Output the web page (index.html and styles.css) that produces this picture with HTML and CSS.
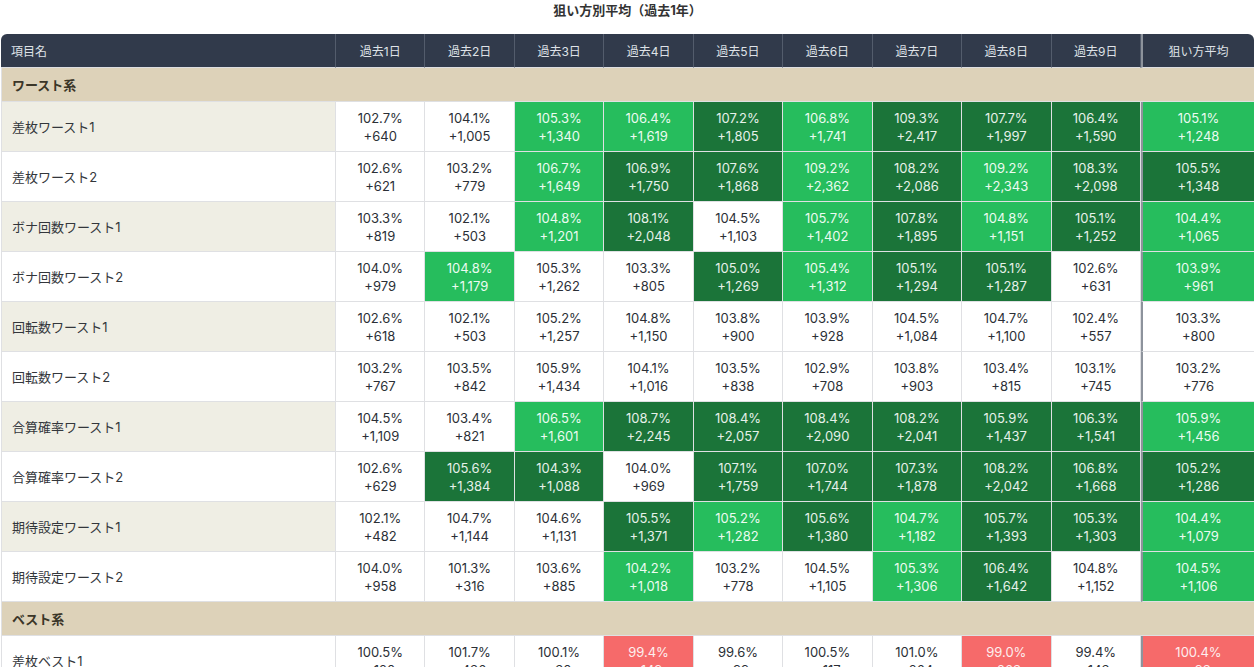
FILE: index.html
```html
<!DOCTYPE html>
<html lang="ja">
<head>
<meta charset="utf-8">
<title>狙い方別平均</title>
<link rel="stylesheet" href="styles.css">
</head>
<body>
<div class="page">
  <h1 class="title">狙い方別平均（過去1年）</h1>
  <table class="grid">
    <colgroup>
      <col class="c-label">
      <col class="c-day"><col class="c-day"><col class="c-day"><col class="c-day"><col class="c-day"><col class="c-day"><col class="c-day"><col class="c-day"><col class="c-day">
      <col class="c-avg">
    </colgroup>
    <thead>
      <tr>
        <th class="h-label">項目名</th>
        <th>過去1日</th><th>過去2日</th><th>過去3日</th><th>過去4日</th><th>過去5日</th><th>過去6日</th><th>過去7日</th><th>過去8日</th><th>過去9日</th>
        <th class="avg">狙い方平均</th>
      </tr>
    </thead>
    <tbody>
      <tr class="group"><td colspan="11">ワースト系</td></tr>
      <tr><td class="label">差枚ワースト1</td>
        <td>102.7%<br>+640</td><td>104.1%<br>+1,005</td><td class="lg">105.3%<br>+1,340</td><td class="lg">106.4%<br>+1,619</td><td class="dg">107.2%<br>+1,805</td><td class="lg">106.8%<br>+1,741</td><td class="dg">109.3%<br>+2,417</td><td class="dg">107.7%<br>+1,997</td><td class="dg">106.4%<br>+1,590</td><td class="avg lg">105.1%<br>+1,248</td></tr>
      <tr><td class="label">差枚ワースト2</td>
        <td>102.6%<br>+621</td><td>103.2%<br>+779</td><td class="lg">106.7%<br>+1,649</td><td class="dg">106.9%<br>+1,750</td><td class="dg">107.6%<br>+1,868</td><td class="lg">109.2%<br>+2,362</td><td class="dg">108.2%<br>+2,086</td><td class="lg">109.2%<br>+2,343</td><td class="dg">108.3%<br>+2,098</td><td class="avg dg">105.5%<br>+1,348</td></tr>
      <tr><td class="label">ボナ回数ワースト1</td>
        <td>103.3%<br>+819</td><td>102.1%<br>+503</td><td class="lg">104.8%<br>+1,201</td><td class="dg">108.1%<br>+2,048</td><td>104.5%<br>+1,103</td><td class="lg">105.7%<br>+1,402</td><td class="dg">107.8%<br>+1,895</td><td class="lg">104.8%<br>+1,151</td><td class="dg">105.1%<br>+1,252</td><td class="avg lg">104.4%<br>+1,065</td></tr>
      <tr><td class="label">ボナ回数ワースト2</td>
        <td>104.0%<br>+979</td><td class="lg">104.8%<br>+1,179</td><td>105.3%<br>+1,262</td><td>103.3%<br>+805</td><td class="dg">105.0%<br>+1,269</td><td class="lg">105.4%<br>+1,312</td><td class="dg">105.1%<br>+1,294</td><td class="dg">105.1%<br>+1,287</td><td>102.6%<br>+631</td><td class="avg lg">103.9%<br>+961</td></tr>
      <tr><td class="label">回転数ワースト1</td>
        <td>102.6%<br>+618</td><td>102.1%<br>+503</td><td>105.2%<br>+1,257</td><td>104.8%<br>+1,150</td><td>103.8%<br>+900</td><td>103.9%<br>+928</td><td>104.5%<br>+1,084</td><td>104.7%<br>+1,100</td><td>102.4%<br>+557</td><td class="avg">103.3%<br>+800</td></tr>
      <tr><td class="label">回転数ワースト2</td>
        <td>103.2%<br>+767</td><td>103.5%<br>+842</td><td>105.9%<br>+1,434</td><td>104.1%<br>+1,016</td><td>103.5%<br>+838</td><td>102.9%<br>+708</td><td>103.8%<br>+903</td><td>103.4%<br>+815</td><td>103.1%<br>+745</td><td class="avg">103.2%<br>+776</td></tr>
      <tr><td class="label">合算確率ワースト1</td>
        <td>104.5%<br>+1,109</td><td>103.4%<br>+821</td><td class="lg">106.5%<br>+1,601</td><td class="dg">108.7%<br>+2,245</td><td class="dg">108.4%<br>+2,057</td><td class="dg">108.4%<br>+2,090</td><td class="dg">108.2%<br>+2,041</td><td class="dg">105.9%<br>+1,437</td><td class="dg">106.3%<br>+1,541</td><td class="avg lg">105.9%<br>+1,456</td></tr>
      <tr><td class="label">合算確率ワースト2</td>
        <td>102.6%<br>+629</td><td class="dg">105.6%<br>+1,384</td><td class="dg">104.3%<br>+1,088</td><td>104.0%<br>+969</td><td class="dg">107.1%<br>+1,759</td><td class="dg">107.0%<br>+1,744</td><td class="dg">107.3%<br>+1,878</td><td class="dg">108.2%<br>+2,042</td><td class="dg">106.8%<br>+1,668</td><td class="avg dg">105.2%<br>+1,286</td></tr>
      <tr><td class="label">期待設定ワースト1</td>
        <td>102.1%<br>+482</td><td>104.7%<br>+1,144</td><td>104.6%<br>+1,131</td><td class="dg">105.5%<br>+1,371</td><td class="lg">105.2%<br>+1,282</td><td class="dg">105.6%<br>+1,380</td><td class="lg">104.7%<br>+1,182</td><td class="dg">105.7%<br>+1,393</td><td class="dg">105.3%<br>+1,303</td><td class="avg lg">104.4%<br>+1,079</td></tr>
      <tr><td class="label">期待設定ワースト2</td>
        <td>104.0%<br>+958</td><td>101.3%<br>+316</td><td>103.6%<br>+885</td><td class="lg">104.2%<br>+1,018</td><td>103.2%<br>+778</td><td>104.5%<br>+1,105</td><td class="lg">105.3%<br>+1,306</td><td class="dg">106.4%<br>+1,642</td><td>104.8%<br>+1,152</td><td class="avg lg">104.5%<br>+1,106</td></tr>
      <tr class="group"><td colspan="11">ベスト系</td></tr>
      <tr><td class="label">差枚ベスト1</td>
        <td>100.5%<br>+120</td><td>101.7%<br>+436</td><td>100.1%<br>+30</td><td class="rd">99.4%<br>-149</td><td>99.6%<br>-99</td><td>100.5%<br>+117</td><td>101.0%<br>+264</td><td class="rd">99.0%<br>-263</td><td>99.4%<br>-143</td><td class="avg rd">100.4%<br>+93</td></tr>
    </tbody>
  </table>
</div>
</body>
</html>
```
FILE: styles.css
```css
html, body {
  margin: 0;
  padding: 0;
  background: #ffffff;
}
body {
  font-family: "Inter", "Noto Sans CJK JP", "Noto Sans", sans-serif;
  color: #2b2f36;
}
.page {
  padding: 0 1px;
}
.title {
  margin: 0;
  height: 20px;
  line-height: 20px;
  font-size: 13px;
  font-weight: 700;
  text-align: center;
  color: #333333;
  margin-bottom: 14px;
}
.grid {
  width: 1253px;
  table-layout: fixed;
  border-collapse: separate;
  border-spacing: 0;
  font-size: 13px;
}
.c-label { width: 335px; }
.c-avg { width: 113px; }
.grid thead th {
  background: #313a4b;
  color: #dfe2e7;
  font-weight: 400;
  font-size: 12px;
  height: 33px;
  padding: 0;
  text-align: center;
  border-right: 1px solid #535c6c;
  border-bottom: 1px solid #dcdde0;
}
.grid thead th.h-label {
  text-align: left;
  padding-left: 10px;
  border-top-left-radius: 6px;
}
.grid thead th:last-child {
  border-top-right-radius: 6px;
  border-right: none;
}
.grid thead th.avg {
  border-left: 2px solid #8d939c;
}
.grid td {
  height: 49px;
  padding: 0;
  text-align: center;
  line-height: 18px;
  border-right: 1px solid #dfe0e3;
  border-bottom: 1px solid #dfe0e3;
  background: #ffffff;
  color: #2b2f36;
}
.grid td:first-child {
  border-left: 1px solid #dfe0e3;
}
.grid td.label {
  text-align: left;
  padding-left: 10px;
  color: #33363b;
}
.grid tbody tr:nth-child(even) td.label {
  background: #efeee4;
}
.grid td.avg {
  border-left: 2px solid #8d939c;
  border-right: none;
}
.grid tr.group td {
  height: 33px;
  background: #ddd2b9;
  text-align: left;
  padding-left: 10px;
  font-weight: 700;
  color: #3b3628;
  border-right: none;
  line-height: 20px;
}
.grid td.lg {
  background: #26bd5d;
  color: #ecfbf1;
}
.grid td.dg {
  background: #1b7439;
  color: #e6f1e9;
}
.grid td.rd {
  background: #f66a6a;
  color: #fdeeee;
}
```
